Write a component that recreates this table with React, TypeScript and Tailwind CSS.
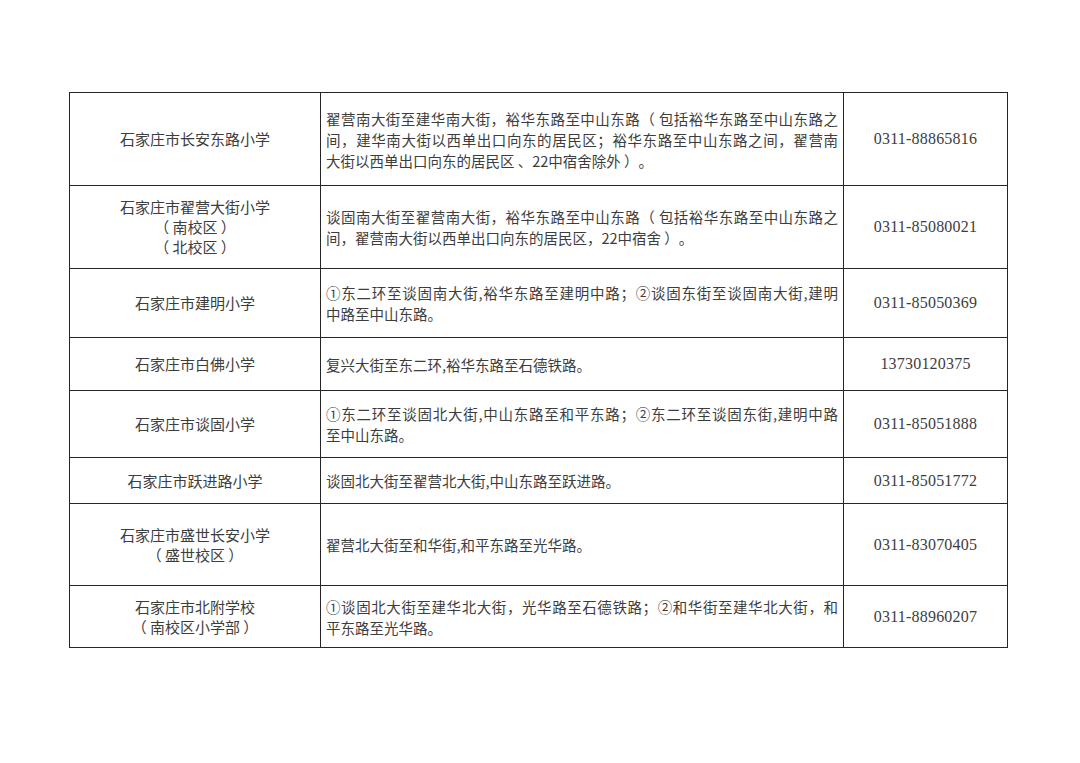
import React from 'react';

type Row = {
  school: string[];
  area: string[];
  phone: string;
  h: string;
};

const rows: Row[] = [
  {
    school: ['石家庄市长安东路小学'],
    area: [
      '翟营南大街至建华南大街，裕华东路至中山东路（ 包括裕华东路至中山东路之',
      '间，建华南大街以西单出口向东的居民区；裕华东路至中山东路之间，翟营南',
      '大街以西单出口向东的居民区 、22中宿舍除外 ）。',
    ],
    phone: '0311-88865816',
    h: 'h-[93px]',
  },
  {
    school: ['石家庄市翟营大街小学', '（ 南校区 ）', '（ 北校区 ）'],
    area: [
      '谈固南大街至翟营南大街，裕华东路至中山东路（ 包括裕华东路至中山东路之',
      '间，翟营南大街以西单出口向东的居民区，22中宿舍 ）。',
    ],
    phone: '0311-85080021',
    h: 'h-[83px]',
  },
  {
    school: ['石家庄市建明小学'],
    area: ['①东二环至谈固南大街,裕华东路至建明中路；②谈固东街至谈固南大街,建明', '中路至中山东路。'],
    phone: '0311-85050369',
    h: 'h-[69px]',
  },
  {
    school: ['石家庄市白佛小学'],
    area: ['复兴大街至东二环,裕华东路至石德铁路。'],
    phone: '13730120375',
    h: 'h-[53px]',
  },
  {
    school: ['石家庄市谈固小学'],
    area: ['①东二环至谈固北大街,中山东路至和平东路；②东二环至谈固东街,建明中路', '至中山东路。'],
    phone: '0311-85051888',
    h: 'h-[67px]',
  },
  {
    school: ['石家庄市跃进路小学'],
    area: ['谈固北大街至翟营北大街,中山东路至跃进路。'],
    phone: '0311-85051772',
    h: 'h-[46px]',
  },
  {
    school: ['石家庄市盛世长安小学', '（ 盛世校区 ）'],
    area: ['翟营北大街至和华街,和平东路至光华路。'],
    phone: '0311-83070405',
    h: 'h-[82px]',
  },
  {
    school: ['石家庄市北附学校', '（ 南校区小学部 ）'],
    area: ['①谈固北大街至建华北大街，光华路至石德铁路；②和华街至建华北大街，和', '平东路至光华路。'],
    phone: '0311-88960207',
    h: 'h-[62px]',
  },
];

const App: React.FC = () => {
  return (
    <div className="w-[1080px] h-[763px] bg-white pt-[92px] pl-[69px] font-['Noto_Sans_CJK_SC',sans-serif] text-[#3d3d3d] [text-spacing-trim:space-all]">
      <table className="border-collapse table-fixed w-[938px]">
        <colgroup>
          <col className="w-[251px]" />
          <col className="w-[523px]" />
          <col className="w-[164px]" />
        </colgroup>
        <tbody>
          {rows.map((r, i) => (
            <tr key={i} className={r.h}>
              <td className="border-[1.5px] border-[#262626] text-center align-middle text-[15px] leading-[20px] p-0 whitespace-pre">
                {r.school.map((s, j) => (
                  <div key={j}>{s}</div>
                ))}
              </td>
              <td className="border-[1.5px] border-[#262626] align-middle text-[14.5px] leading-[21px] pl-[5px] pr-[5px] py-0">
                {r.area.map((a, j) => (
                  <div
                    key={j}
                    className={
                      j < r.area.length - 1
                        ? 'text-justify [text-align-last:justify] whitespace-nowrap'
                        : 'whitespace-nowrap'
                    }
                  >
                    {a}
                  </div>
                ))}
              </td>
              <td className="border-[1.5px] border-[#262626] text-center align-middle p-0 font-['Liberation_Serif',serif] text-[16px] tracking-[0.2px]">
                {r.phone}
              </td>
            </tr>
          ))}
        </tbody>
      </table>
    </div>
  );
};

export default App;
